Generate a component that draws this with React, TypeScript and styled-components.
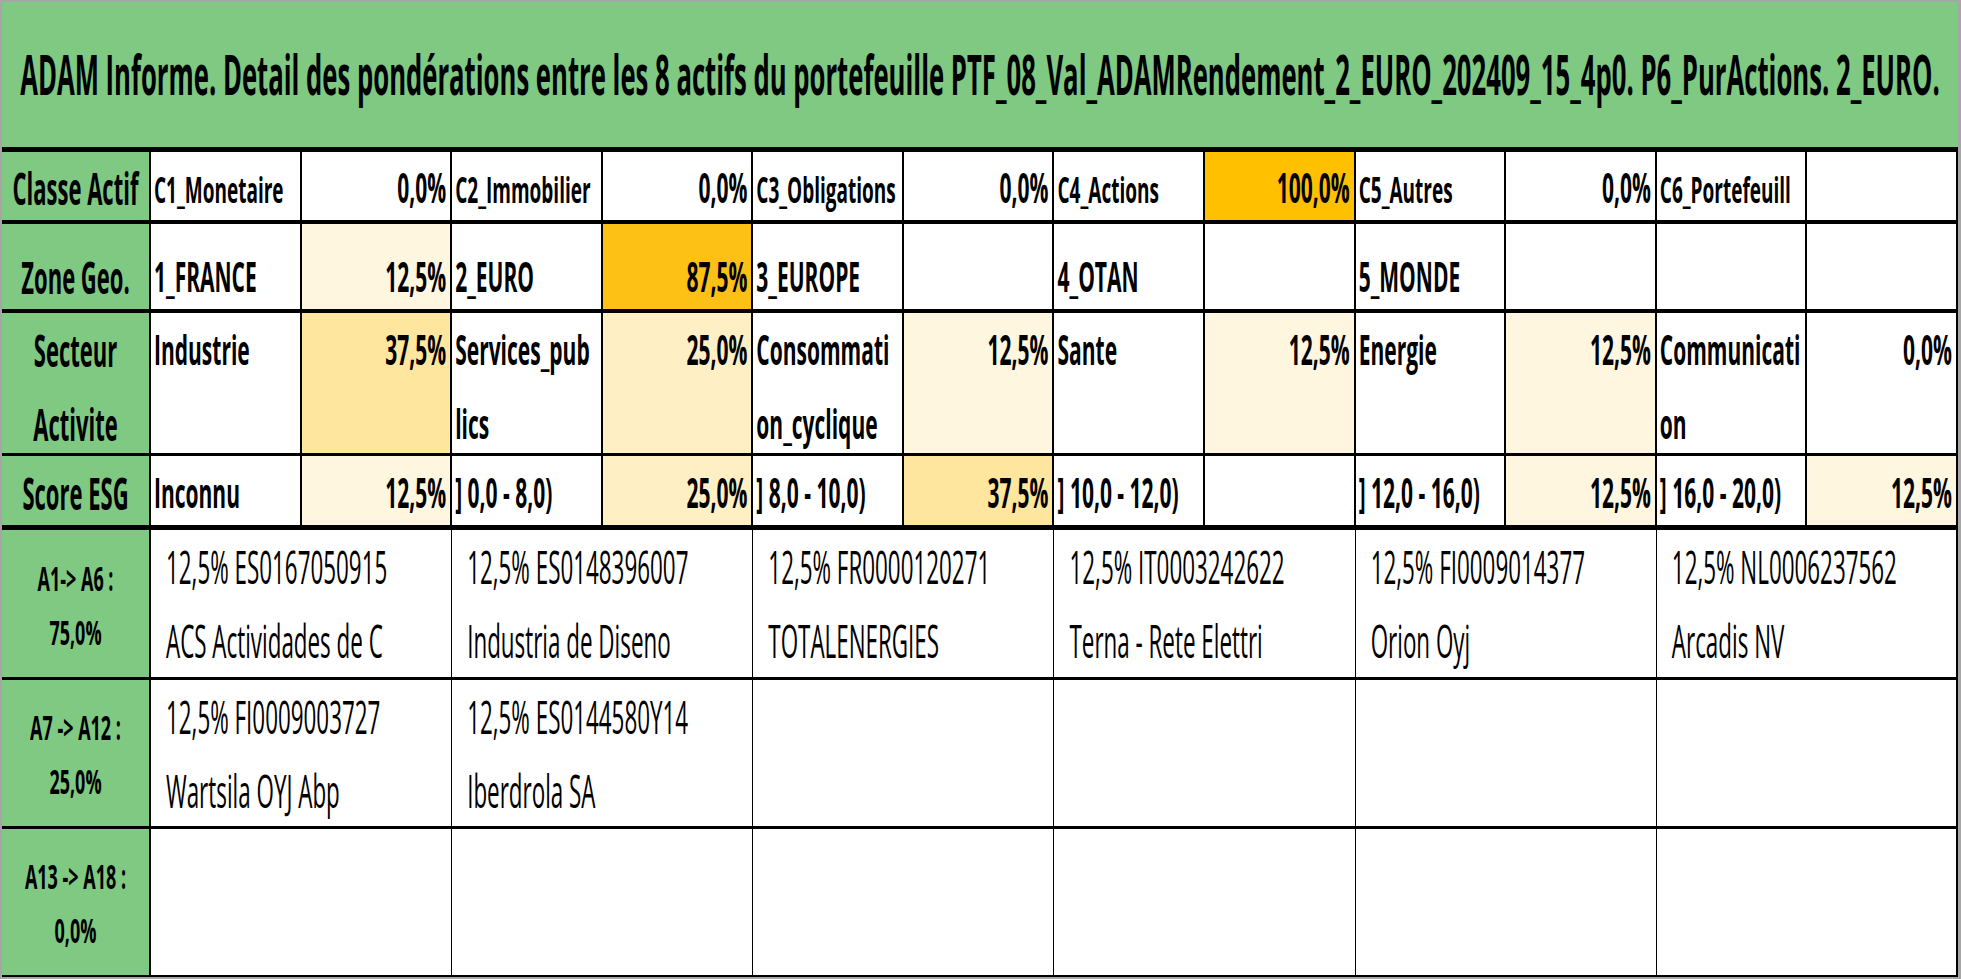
import React from 'react';
import styled, { createGlobalStyle } from 'styled-components';

const GlobalStyle = createGlobalStyle`
  html, body {
    margin: 0;
    padding: 0;
    background: #fff;
  }
  body {
    font-family: 'Open Sans', 'Noto Sans', 'Liberation Sans', sans-serif;
    color: #000;
    overflow: hidden;
  }
`;

const GREEN = '#80c982';

// fills of the conditional colour scale used on the weights
const tones: Record<string, string> = {
  '12,5%': '#fff6e0',
  '25,0%': '#ffefc5',
  '37,5%': '#ffe69e',
  '87,5%': '#fdc014',
  '100,0%': '#ffc000',
};

type VAlign = 'top' | 'bottom' | 'center';

const justify: Record<VAlign, string> = {
  top: 'flex-start',
  bottom: 'flex-end',
  center: 'center',
};

const Sheet = styled.div`
  box-sizing: border-box;
  width: 1961px;
  height: 979px;
  display: grid;
  grid-template-columns: 149px repeat(12, minmax(0, 1fr));
  grid-template-rows: 150px 72px 89px 143px 74px 150px 149px 148px;
  border: 2px solid #a6a6a6;
  border-right-width: 3px;
  background: #fff;
`;

const Banner = styled.div`
  grid-column: 1 / -1;
  background: ${GREEN};
  border-bottom: 5px solid #000;
  display: flex;
  align-items: center;
  justify-content: center;
  overflow: hidden;
`;

const Cell = styled.div<{
  $fill?: string;
  $rule: number;
  $side?: number;
  $span?: number;
  $v: VAlign;
  $align: 'left' | 'right' | 'center';
  $pad?: string;
}>`
  box-sizing: border-box;
  min-width: 0;
  grid-column: span ${p => p.$span ?? 1};
  background: ${p => p.$fill ?? '#fff'};
  border-bottom: ${p => p.$rule}px solid #000;
  border-right: ${p => p.$side ?? 2}px solid #000;
  display: flex;
  flex-direction: column;
  justify-content: ${p => justify[p.$v]};
  text-align: ${p => p.$align};
  padding: ${p => p.$pad ?? '0'};
  overflow: hidden;
`;

// the sheet was captured stretched vertically, so the glyphs are scaled on Y
const Ink = styled.span<{
  $size: number;
  $bold?: boolean;
  $sy?: number;
  $lh?: number;
  $origin?: string;
}>`
  display: block;
  font-size: ${p => p.$size}px;
  font-weight: ${p => (p.$bold ? 700 : 400)};
  line-height: ${p => (p.$lh ? `${p.$lh}px` : 1)};
  white-space: nowrap;
  transform: scaleY(${p => p.$sy ?? 2});
  transform-origin: ${p => p.$origin ?? 'center'};
`;

interface Pair {
  name: string[];
  pct: string;
}

interface SummaryRow {
  label: string[];
  rule: number;
  v: VAlign;
  nameSize: number;
  nameSy: number;
  items: Pair[];
}

const p = (name: string | string[], pct = ''): Pair => ({
  name: Array.isArray(name) ? name : name ? [name] : [],
  pct,
});

const summary: SummaryRow[] = [
  {
    label: ['Classe Actif'],
    rule: 4,
    v: 'bottom',
    nameSize: 19,
    nameSy: 1.85,
    items: [
      p('C1_Monetaire', '0,0%'),
      p('C2_Immobilier', '0,0%'),
      p('C3_Obligations', '0,0%'),
      p('C4_Actions', '100,0%'),
      p('C5_Autres', '0,0%'),
      p('C6_Portefeuill'),
    ],
  },
  {
    label: ['Zone Geo.'],
    rule: 4,
    v: 'bottom',
    nameSize: 21,
    nameSy: 2,
    items: [
      p('1_FRANCE', '12,5%'),
      p('2_EURO', '87,5%'),
      p('3_EUROPE'),
      p('4_OTAN'),
      p('5_MONDE'),
      p(''),
    ],
  },
  {
    label: ['Secteur', 'Activite'],
    rule: 3,
    v: 'top',
    nameSize: 21,
    nameSy: 2,
    items: [
      p('Industrie', '37,5%'),
      p(['Services_pub', 'lics'], '25,0%'),
      p(['Consommati', 'on_cyclique'], '12,5%'),
      p('Sante', '12,5%'),
      p('Energie', '12,5%'),
      p(['Communicati', 'on'], '0,0%'),
    ],
  },
  {
    label: ['Score ESG'],
    rule: 5,
    v: 'bottom',
    nameSize: 21,
    nameSy: 2,
    items: [
      p('Inconnu', '12,5%'),
      p('] 0,0 - 8,0)', '25,0%'),
      p('] 8,0 - 10,0)', '37,5%'),
      p('] 10,0 - 12,0)'),
      p('] 12,0 - 16,0)', '12,5%'),
      p('] 16,0 - 20,0)', '12,5%'),
    ],
  },
];

interface AssetRow {
  label: string[];
  rule: number;
  assets: string[][];
}

const assetRows: AssetRow[] = [
  {
    label: ['A1-> A6 :', '75,0%'],
    rule: 3,
    assets: [
      ['12,5% ES0167050915', 'ACS Actividades de C'],
      ['12,5% ES0148396007', 'Industria de Diseno'],
      ['12,5% FR0000120271', 'TOTALENERGIES'],
      ['12,5% IT0003242622', 'Terna - Rete Elettri'],
      ['12,5% FI0009014377', 'Orion Oyj'],
      ['12,5% NL0006237562', 'Arcadis NV'],
    ],
  },
  {
    label: ['A7 -> A12 :', '25,0%'],
    rule: 3,
    assets: [
      ['12,5% FI0009003727', 'Wartsila OYJ Abp'],
      ['12,5% ES0144580Y14', 'Iberdrola SA'],
      [],
      [],
      [],
      [],
    ],
  },
  {
    label: ['A13 -> A18 :', '0,0%'],
    rule: 2,
    assets: [[], [], [], [], [], []],
  },
];

const Lines: React.FC<{ lines: string[] }> = ({ lines }) => (
  <>
    {lines.map((line, i) => (
      <React.Fragment key={i}>
        {i > 0 && <br />}
        {line}
      </React.Fragment>
    ))}
  </>
);

const App: React.FC = () => {
  return (
    <>
      <GlobalStyle />
      <Sheet>
        <Banner>
          <Ink $size={25.7} $bold $sy={2.15}>
            ADAM Informe. Detail des pondérations entre les 8 actifs du portefeuille
            PTF_08_Val_ADAMRendement_2_EURO_202409_15_4p0. P6_PurActions. 2_EURO.
          </Ink>
        </Banner>

        {summary.map(row => {
          const top = row.v === 'top';
          const origin = top ? 'top' : 'bottom';
          const lh = top ? 36.5 : undefined;
          const namePad = top ? '0 4px 0 3px' : '0 4px 11px 3px';
          return (
            <React.Fragment key={row.label.join(' ')}>
              <Cell
                $fill={GREEN}
                $rule={row.rule}
                $v={row.v}
                $align="center"
                $pad={top ? '0' : '0 0 11px'}
              >
                <Ink $size={22} $bold $lh={lh} $origin={origin}>
                  <Lines lines={row.label} />
                </Ink>
              </Cell>
              {row.items.map((it, i) => (
                <React.Fragment key={i}>
                  <Cell $rule={row.rule} $v={row.v} $align="left" $pad={namePad}>
                    <Ink
                      $size={row.nameSize}
                      $bold
                      $sy={row.nameSy}
                      $lh={lh}
                      $origin={origin}
                    >
                      <Lines lines={it.name} />
                    </Ink>
                  </Cell>
                  <Cell
                    $rule={row.rule}
                    $v={row.v}
                    $align="right"
                    $pad={namePad}
                    $fill={tones[it.pct]}
                  >
                    <Ink $size={21} $bold $lh={lh} $origin={origin}>
                      {it.pct}
                    </Ink>
                  </Cell>
                </React.Fragment>
              ))}
            </React.Fragment>
          );
        })}

        {assetRows.map(row => (
          <React.Fragment key={row.label[0]}>
            <Cell $fill={GREEN} $rule={row.rule} $v="center" $align="center" $pad="4px 0 0">
              <Ink $size={18} $bold $sy={1.85} $lh={29}>
                <Lines lines={row.label} />
              </Ink>
            </Cell>
            {row.assets.map((lines, i) => (
              <Cell
                key={i}
                $span={2}
                $rule={row.rule}
                $side={i === row.assets.length - 1 ? 2 : 1}
                $v="top"
                $align="left"
                $pad="0 0 0 15px"
              >
                <Ink $size={22.4} $lh={37} $origin="top">
                  <Lines lines={lines} />
                </Ink>
              </Cell>
            ))}
          </React.Fragment>
        ))}
      </Sheet>
    </>
  );
};

export default App;
